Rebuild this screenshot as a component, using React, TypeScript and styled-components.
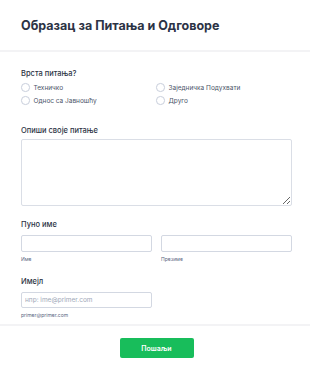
import React from "react";
import styled, { createGlobalStyle } from "styled-components";

const Global = createGlobalStyle`
  html, body { margin: 0; padding: 0; background: #ffffff; }
  body { font-family: Inter, "Noto Sans", "DejaVu Sans", sans-serif; color: #2c3345; }
  * { box-sizing: border-box; }
`;

const Page = styled.div`
  width: 310px;
  height: 377px;
  background: #ffffff;
  overflow: hidden;
`;

const Header = styled.header`
  height: 52px;
  display: flex;
  align-items: center;
  padding: 2px 0 0 21px;
  border-bottom: 2px solid #f3f3f5;
`;

const Title = styled.h1`
  margin: 0;
  font-size: 12.5px;
  line-height: 14px;
  font-weight: 700;
  color: #2c3345;
  letter-spacing: 0;
`;

const Body = styled.div`
  padding: 0 18px 0 21px;
  display: flex;
  flex-direction: column;
`;

const Field = styled.div<{ $top: number }>`
  margin-top: ${(p) => p.$top}px;
  display: flex;
  flex-direction: column;
`;

const Label = styled.div`
  font-size: 7.5px;
  line-height: 10px;
  font-weight: 500;
  color: #2c3345;
`;

const RadioGrid = styled.div`
  margin-top: 2px;
  display: grid;
  grid-template-columns: 135px 1fr;
`;

const RadioItem = styled.label`
  display: flex;
  align-items: center;
  height: 13px;
  gap: 4px;
  font-size: 6.5px;
  color: #4a5468;
`;

const Circle = styled.span`
  width: 8.5px;
  height: 8.5px;
  border-radius: 50%;
  border: 1px solid #c8cedb;
  background: #fff;
  flex-shrink: 0;
`;

const TextArea = styled.textarea`
  margin-top: 3px;
  width: 271px;
  height: 67px;
  border: 1px solid #dadee6;
  border-radius: 2px;
  font: inherit;
  padding: 3px;
  background: #fff;
  outline: none;
`;

const Row = styled.div`
  margin-top: 5px;
  display: grid;
  grid-template-columns: 131px 131px;
  column-gap: 9px;
`;

const Col = styled.div`
  display: flex;
  flex-direction: column;
`;

const Input = styled.input<{ $h: number }>`
  width: 100%;
  height: ${(p) => p.$h}px;
  border: 1px solid #d3d8e2;
  border-radius: 2px;
  padding: 0 3px;
  font-family: Inter, "Noto Sans", sans-serif;
  font-size: 6.5px;
  color: #2c3345;
  background: #fff;
  outline: none;
  &::placeholder { color: #a0a8b8; }
`;

const SubLabel = styled.div<{ $top: number }>`
  margin-top: ${(p) => p.$top}px;
  font-size: 5px;
  line-height: 7px;
  color: #57647e;
`;

const Footer = styled.div`
  margin-top: 5px;
  border-top: 2px solid #f3f3f5;
  display: flex;
  justify-content: center;
  padding-top: 12px;
`;

const Submit = styled.button`
  width: 74px;
  height: 20px;
  margin-left: 3px;
  border: none;
  border-radius: 2px;
  background: #18bd5b;
  color: #ffffff;
  font-family: Inter, "Noto Sans", sans-serif;
  font-size: 7px;
  font-weight: 600;
  padding: 0;
`;

const options = ["Техничко", "Заједничка Подухвати", "Однос са Јавношћу", "Друго"];

export default function App() {
  return (
    <Page>
      <Global />
      <Header>
        <Title>Образац за Питања и Одговоре</Title>
      </Header>
      <Body>
        <Field $top={17}>
          <Label>Врста питања?</Label>
          <RadioGrid>
            {options.map((o) => (
              <RadioItem key={o}>
                <Circle />
                {o}
              </RadioItem>
            ))}
          </RadioGrid>
        </Field>
        <Field $top={19}>
          <Label>Опиши своје питање</Label>
          <TextArea />
        </Field>
        <Field $top={14}>
          <Label>Пуно име</Label>
          <Row>
            <Col>
              <Input $h={17} />
              <SubLabel $top={4}>Име</SubLabel>
            </Col>
            <Col>
              <Input $h={17} />
              <SubLabel $top={4}>Презиме</SubLabel>
            </Col>
          </Row>
        </Field>
        <Field $top={14}>
          <Label>Имејл</Label>
          <Row>
            <Col>
              <Input $h={16} placeholder="нпр: ime@primer.com" />
              <SubLabel $top={4}>primer@primer.com</SubLabel>
            </Col>
          </Row>
        </Field>
      </Body>
      <Footer>
        <Submit>Пошаљи</Submit>
      </Footer>
    </Page>
  );
}
